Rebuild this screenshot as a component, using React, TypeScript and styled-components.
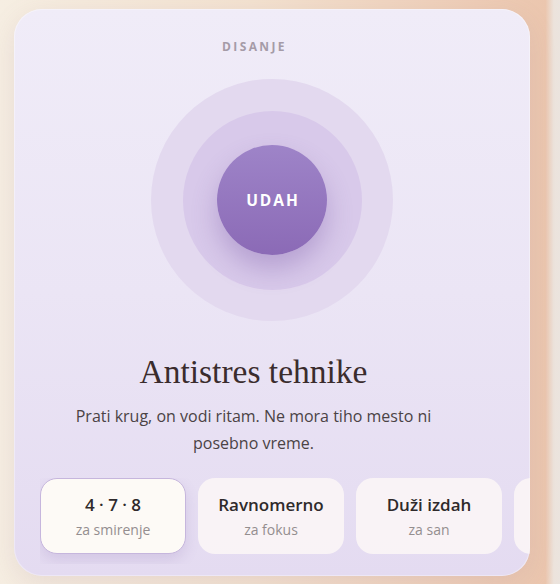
import React from "react";
import styled, { createGlobalStyle } from "styled-components";

const Global = createGlobalStyle`
  html, body { margin: 0; padding: 0; }
  body {
    width: 560px;
    height: 584px;
    overflow: hidden;
    background: linear-gradient(90deg, #f6eee2 0%, #f3e2d0 45%, #eecdb6 85%, #ebc6ae 97.4%, #ece3dc 98.9%, #ebe4de 100%);
    font-family: "Open Sans", "Noto Sans", sans-serif;
  }
`;

const Page = styled.div`
  padding: 9px 30px 8px 14px;
  box-sizing: border-box;
  height: 584px;
`;

const Card = styled.section`
  width: 516px;
  height: 567px;
  box-sizing: border-box;
  border-radius: 28px;
  overflow: hidden;
  background: linear-gradient(180deg, #f0ecf8 0%, #ebe5f5 50%, #e4dbf1 100%);
  box-shadow: 0 8px 28px rgba(150, 110, 140, 0.14), 0 0 0 1px rgba(255, 255, 255, 0.35) inset;
  padding: 30px 0 22px 26px;
  display: flex;
  flex-direction: column;
`;

const TextBlock = styled.div`
  max-width: 427px;
  width: 100%;
  text-align: center;
`;

const Eyebrow = styled.div`
  font-size: 12px;
  line-height: 16px;
  font-weight: 700;
  letter-spacing: 2.4px;
  color: #a59ba7;
  padding-left: 2px;
`;

const Stage = styled.div`
  margin: 24px 26px 0 0;
  display: flex;
  justify-content: center;
`;

const Ring = styled.div<{ $size: number; $bg: string }>`
  width: ${(p) => p.$size}px;
  height: ${(p) => p.$size}px;
  border-radius: 50%;
  background: ${(p) => p.$bg};
  display: flex;
  align-items: center;
  justify-content: center;
  flex: none;
`;

const Core = styled.div`
  width: 110px;
  height: 110px;
  border-radius: 50%;
  background: linear-gradient(180deg, #9e84c8 0%, #8b6ab6 100%);
  box-shadow: 0 14px 26px rgba(112, 78, 160, 0.32);
  display: flex;
  align-items: center;
  justify-content: center;
  color: #ffffff;
  font-size: 15.5px;
  font-weight: 700;
  letter-spacing: 2px;
  padding-left: 2px;
  box-sizing: border-box;
`;

const Title = styled.h1`
  margin: 31px 0 0;
  font-family: "Liberation Serif", "DejaVu Serif", serif;
  font-weight: 400;
  font-size: 33.5px;
  line-height: 40px;
  color: #3a2c2d;
`;

const Lead = styled.p`
  margin: 11px 0 0;
  padding: 0 20px;
  font-size: 16px;
  line-height: 27px;
  color: #4b4345;
`;

const Chips = styled.div`
  margin-top: 21px;
  display: flex;
  gap: 12px;
  overflow: hidden;
  padding-bottom: 10px;
  margin-bottom: -10px;
`;

const Chip = styled.button<{ $active?: boolean }>`
  flex: none;
  width: 146px;
  height: 76px;
  box-sizing: border-box;
  border-radius: 17px;
  border: 1px solid ${(p) => (p.$active ? "#c6b6dd" : "transparent")};
  background: ${(p) => (p.$active ? "#fdfaf6" : "rgba(252, 248, 246, 0.82)")};
  box-shadow: ${(p) => (p.$active ? "0 6px 14px rgba(120, 90, 160, 0.16)" : "none")};
  padding: 15px 8px 0;
  display: flex;
  flex-direction: column;
  align-items: center;
  font-family: inherit;
  cursor: pointer;
`;

const ChipTitle = styled.span`
  font-size: 17px;
  line-height: 22px;
  font-weight: 600;
  color: #2f2a2b;
  white-space: nowrap;
`;

const ChipSub = styled.span`
  margin-top: 4px;
  font-size: 14px;
  line-height: 20px;
  color: #948e8f;
  white-space: nowrap;
`;

const techniques = [
  { title: "4 · 7 · 8", sub: "za smirenje", active: true },
  { title: "Ravnomerno", sub: "za fokus" },
  { title: "Duži izdah", sub: "za san" },
];

export default function App() {
  return (
    <>
      <Global />
      <Page>
        <Card>
          <TextBlock>
            <Eyebrow>DISANJE</Eyebrow>
          </TextBlock>
          <Stage>
            <Ring $size={242} $bg="#e3d9ef">
              <Ring $size={179} $bg="#d8c9ea">
                <Core>UDAH</Core>
              </Ring>
            </Ring>
          </Stage>
          <TextBlock>
            <Title>Antistres tehnike</Title>
            <Lead>Prati krug, on vodi ritam. Ne mora tiho mesto ni posebno vreme.</Lead>
          </TextBlock>
          <Chips>
            {techniques.map((t) => (
              <Chip key={t.title} $active={t.active}>
                <ChipTitle>{t.title}</ChipTitle>
                <ChipSub>{t.sub}</ChipSub>
              </Chip>
            ))}
            <Chip aria-label="Još tehnika" />
          </Chips>
        </Card>
      </Page>
    </>
  );
}
